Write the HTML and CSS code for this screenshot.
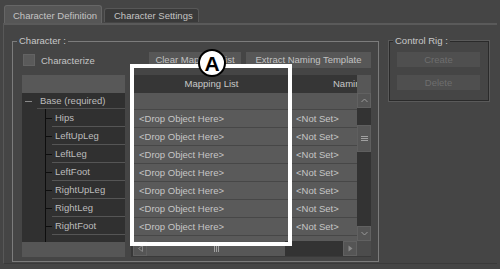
FILE: index.html
```html
<!DOCTYPE html>
<html lang="en">
<head>
  <meta charset="UTF-8"/>
  <title>Character Controls</title>
  <link rel="stylesheet" href="styles.css">
</head>
<body>
  <!-- TABS -->
  <div class="tabs">
    <div class="tab active">Character Definition</div>
    <div class="tab">Character Settings</div>
  </div>

  <div class="panel">
    <!-- CHARACTER GROUP -->
    <div class="group character">
      <div class="group-title">Character :</div>
      <div class="toolbar">
        <span class="checkbox"></span>
        <span class="check-label">Characterize</span>
        <div class="buttons">
          <div class="btn clear">Clear Mapping List</div>
          <div class="btn extract">Extract Naming Template</div>
        </div>
      </div>

      <div class="lists">
        <!-- tree -->
        <div class="tree">
          <div class="tree-head"></div>
          <div class="tree-base">
            <span class="minus"></span>
            <span class="base-label">Base (required)</span>
          </div>
          <div class="tree-children">
            <div class="node"><span class="tick"></span><span class="node-label">Hips</span></div>
            <div class="node"><span class="tick"></span><span class="node-label">LeftUpLeg</span></div>
            <div class="node"><span class="tick"></span><span class="node-label">LeftLeg</span></div>
            <div class="node"><span class="tick"></span><span class="node-label">LeftFoot</span></div>
            <div class="node"><span class="tick"></span><span class="node-label">RightUpLeg</span></div>
            <div class="node"><span class="tick"></span><span class="node-label">RightLeg</span></div>
            <div class="node"><span class="tick"></span><span class="node-label">RightFoot</span></div>
          </div>
          <div class="tree-foot"></div>
        </div>

        <!-- mapping table -->
        <div class="table">
          <div class="table-head">
            <div class="col-map">Mapping List</div>
            <div class="col-name">Naming List</div>
          </div>
          <div class="vscroll">
            <div class="vs-corner"></div>
            <div class="sb-btn">
              <svg width="7" height="5" viewBox="0 0 7 5"><polyline points="0.5,4 3.5,1 6.5,4" fill="none" stroke="#9a9a9a" stroke-width="1"/></svg>
            </div>
            <div class="vs-track short"></div>
            <div class="vs-thumb">
              <svg width="7" height="5" viewBox="0 0 7 5"><path d="M0 0.5H7M0 2.5H7M0 4.5H7" stroke="#a0a0a0" stroke-width="1"/></svg>
            </div>
            <div class="vs-track"></div>
            <div class="sb-btn">
              <svg width="7" height="5" viewBox="0 0 7 5"><polyline points="0.5,1 3.5,4 6.5,1" fill="none" stroke="#9a9a9a" stroke-width="1"/></svg>
            </div>
          </div>
          <div class="table-body">
            <div class="row-base"></div>
            <div class="row"><div class="cell-map">&lt;Drop Object Here&gt;</div><div class="cell-name">&lt;Not Set&gt;</div></div>
            <div class="row"><div class="cell-map">&lt;Drop Object Here&gt;</div><div class="cell-name">&lt;Not Set&gt;</div></div>
            <div class="row"><div class="cell-map">&lt;Drop Object Here&gt;</div><div class="cell-name">&lt;Not Set&gt;</div></div>
            <div class="row"><div class="cell-map">&lt;Drop Object Here&gt;</div><div class="cell-name">&lt;Not Set&gt;</div></div>
            <div class="row"><div class="cell-map">&lt;Drop Object Here&gt;</div><div class="cell-name">&lt;Not Set&gt;</div></div>
            <div class="row"><div class="cell-map">&lt;Drop Object Here&gt;</div><div class="cell-name">&lt;Not Set&gt;</div></div>
            <div class="row"><div class="cell-map">&lt;Drop Object Here&gt;</div><div class="cell-name">&lt;Not Set&gt;</div></div>
            <div class="row"><div class="cell-map"></div><div class="cell-name"></div></div>
          </div>
          <div class="hscroll">
            <div class="sb-btn h">
              <svg width="5" height="7" viewBox="0 0 5 7"><polygon points="4.5,0.5 4.5,6.5 0.5,3.5" fill="none" stroke="#8a8a8a" stroke-width="1"/></svg>
            </div>
            <div class="hs-thumb">
              <svg width="5" height="7" viewBox="0 0 5 7"><path d="M0.5 0V7M2.5 0V7M4.5 0V7" stroke="#a0a0a0" stroke-width="1"/></svg>
            </div>
            <div class="hs-track"></div>
            <div class="sb-btn h">
              <svg width="5" height="7" viewBox="0 0 5 7"><polygon points="0.5,0.5 0.5,6.5 4.5,3.5" fill="#8a8a8a"/></svg>
            </div>
          </div>
          <div class="hs-corner"></div>
        </div>
      </div>
    </div>

    <!-- CONTROL RIG GROUP -->
    <div class="group rig">
      <div class="group-title">Control Rig :</div>
      <div class="btn disabled">Create</div>
      <div class="btn disabled">Delete</div>
    </div>
  </div>

  <!-- annotation overlay -->
  <div class="callout-box"></div>
  <div class="callout-badge">A</div>
</body>
</html>
```

FILE: styles.css
```css
body {
  margin: 0;
  width: 500px;
  height: 269px;
  overflow: hidden;
  background: #454545;
  color: #c4c4c4;
  font-family: "Liberation Sans", Arial, sans-serif;
  font-size: 9.5px;
  position: relative;
}
/* TABS */
.tabs {
  display: flex;
  align-items: flex-end;
  gap: 2px;
  height: 18px;
  padding: 5px 0 0 4px;
}
.tab {
  box-sizing: border-box;
  height: 14px;
  width: 95px;
  padding-left: 9px;
  line-height: 13px;
  background: #3a3a3a;
  border: 1px solid #575757;
  border-bottom: none;
  border-radius: 3px 3px 0 0;
  margin-bottom: 1px;
}
.tab.active {
  height: 18px;
  width: 98px;
  padding-left: 8px;
  line-height: 19px;
  background: #565656;
  border-color: #666;
  margin-bottom: 0;
}
/* PANEL */
.panel {
  display: flex;
  align-items: flex-start;
  gap: 10px;
  margin-left: 3px;
  width: 494px;
  height: 241px;
  box-sizing: border-box;
  border-top: 2px solid #5a5a5a;
  border-left: 1px solid #585858;
  border-bottom: 1px solid #3a3a3a;
  padding: 16px 0 0 8px;
}
.group {
  box-sizing: border-box;
}
.group-title {
  width: fit-content;
  height: 12px;
  line-height: 12px;
  padding: 0 2px;
  background: #454545;
  color: #c8c8c8;
}
.character {
  width: 367px;
  border: 1px solid #7c7c7c;
  padding: 0 7px 4px 9px;
}
.character .group-title {
  margin: -7px 0 0 -5px;
}
.rig {
  width: 100px;
  border: 1px solid #2a2a2a;
  box-shadow: 0 0 0 1px #5a5a5a;
  padding: 0 8px 10px 7px;
}
.rig .group-title {
  margin: -7px 0 0 -4px;
}
/* buttons */
.btn {
  height: 16px;
  line-height: 16px;
  text-align: center;
  background: #575757;
  color: #c2c2c2;
  white-space: nowrap;
}
.btn.clear { width: 92px; }
.btn.extract { width: 125px; }
.btn.disabled {
  width: 83px;
  height: 15px;
  line-height: 15px;
  margin-top: 5px;
  background: #4f4f4f;
  color: #6e6e6e;
}
.btn.disabled + .btn.disabled {
  margin-top: 8px;
}
/* toolbar row */
.toolbar {
  display: flex;
  align-items: center;
  height: 16px;
  margin-top: 5px;
}
.checkbox {
  width: 12px;
  height: 12px;
  box-sizing: border-box;
  margin-left: 1px;
  background: #5a5a5a;
  border: 1px solid #636363;
}
.check-label {
  margin-left: 6px;
}
.buttons {
  display: flex;
  gap: 5px;
  margin-left: auto;
}
/* LISTS */
.lists {
  display: flex;
  gap: 6px;
  height: 182px;
  margin-top: 7px;
}
.tree {
  width: 103px;
  display: flex;
  flex-direction: column;
  background: #303030;
  color: #bdbdbd;
}
.tree-head {
  height: 18px;
  background: #585858;
}
.tree-base {
  display: flex;
  align-items: center;
  height: 16px;
  padding-left: 3px;
}
.minus {
  width: 7px;
  height: 1px;
  background: #8a8a8a;
}
.base-label {
  flex: 1;
  margin-left: 5px;
  padding-left: 3px;
  height: 15px;
  line-height: 15px;
  border-bottom: 1px solid #505050;
}
.tree-children {
  flex: 1;
  margin-left: 23px;
  border-left: 1px solid #0e0e0e;
}
.node {
  display: flex;
  align-items: center;
  height: 18px;
}
.tick {
  width: 6px;
  height: 1px;
  background: #0e0e0e;
}
.node-label {
  flex: 1;
  height: 17px;
  line-height: 18px;
  padding-left: 3px;
  border-bottom: 1px solid #555;
}
.tree-foot {
  height: 15px;
  background: #565656;
}
/* mapping table */
.table {
  width: 240px;
  box-sizing: border-box;
  border-left: 2px solid #383838;
  border-bottom: 1px solid #3a3a3a;
  display: grid;
  grid-template-columns: 224px 14px;
  grid-template-rows: 18px 148px 15px;
  background: #333;
}
.table-head {
  grid-column: 1;
  grid-row: 1;
  display: flex;
  background: #363636;
  line-height: 18px;
  color: #c8c8c8;
  overflow: hidden;
  white-space: nowrap;
}
.col-map {
  flex: none;
  width: 157px;
  text-align: center;
}
.col-name {
  flex: none;
  padding-left: 43px;
}
.table-body {
  grid-column: 1;
  grid-row: 2;
  overflow: hidden;
  background: #555;
}
.row-base {
  height: 16px;
  background: #585858;
}
.row {
  display: flex;
  height: 17px;
  line-height: 18px;
  background: #5a5a5a;
  border-top: 1px solid #474747;
  color: #c6c6c6;
  white-space: nowrap;
}
.cell-map {
  flex: none;
  width: 151px;
  padding-left: 6px;
  border-right: 1px solid #474747;
}
.cell-name {
  flex: 1;
  padding-left: 5px;
}
/* scrollbars */
.vscroll {
  grid-column: 2;
  grid-row: 1 / 3;
  display: flex;
  flex-direction: column;
}
.vs-corner {
  height: 18px;
  background: #575757;
}
.sb-btn {
  height: 15px;
  box-sizing: border-box;
  display: flex;
  align-items: center;
  justify-content: center;
  background: #555;
  border: 1px solid #616161;
}
.sb-btn.h {
  width: 14px;
  height: 15px;
}
.vs-track {
  flex: 1;
  background: #333;
}
.vs-track.short {
  flex: none;
  height: 17px;
}
.vs-thumb {
  height: 27px;
  display: flex;
  align-items: center;
  justify-content: center;
  background: #565656;
  border: 1px solid #5f5f5f;
  box-sizing: border-box;
}
.hscroll {
  grid-column: 1;
  grid-row: 3;
  display: flex;
}
.hs-thumb {
  width: 138px;
  display: flex;
  align-items: center;
  justify-content: center;
  background: #575757;
}
.hs-track {
  flex: 1;
  background: #333;
}
.hs-corner {
  grid-column: 2;
  grid-row: 3;
  background: #4c4c4c;
}
/* ANNOTATION */
.callout-box {
  position: absolute;
  left: 130px;
  top: 64px;
  width: 162px;
  height: 182px;
  box-sizing: border-box;
  border: 4px solid #fff;
}
.callout-badge {
  position: absolute;
  left: 198px;
  top: 49px;
  width: 28px;
  height: 28px;
  box-sizing: border-box;
  border: 2px solid #000;
  border-radius: 50%;
  background: #fff;
  color: #000;
  font-size: 21px;
  font-weight: 700;
  line-height: 25px;
  text-align: center;
}
```
